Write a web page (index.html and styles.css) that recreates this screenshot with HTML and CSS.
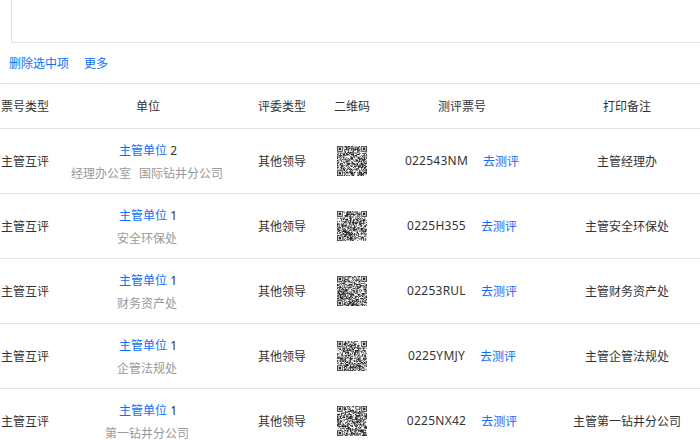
FILE: index.html
```
<!DOCTYPE html>
<html lang="zh-CN">
<head>
<meta charset="utf-8">
<title>测评票</title>
<link rel="stylesheet" href="styles.css">
</head>
<body>
<div class="page">
  <div class="textbox"></div>
  <div class="actions"><a>删除选中项</a><a>更多</a></div>
  <table class="grid">
    <colgroup><col class="c1"><col class="c2"><col class="c3"><col class="c4"><col class="c5"><col class="c6"></colgroup>
    <thead>
      <tr><th>票号类型</th><th>单位</th><th>评委类型</th><th>二维码</th><th>测评票号</th><th>打印备注</th></tr>
    </thead>
    <tbody>
      <tr>
        <td>主管互评</td>
        <td><div class="unit"><a>主管单位</a> 2</div><div class="dept"><span>经理办公室</span><span>国际钻井分公司</span></div></td>
        <td>其他领导</td>
        <td><svg class="qr" data-seed="11" viewBox="0 0 37 37"></svg></td>
        <td><div class="ticket"><span>022543NM</span><a>去测评</a></div></td>
        <td>主管经理办</td>
      </tr>
      <tr>
        <td>主管互评</td>
        <td><div class="unit"><a>主管单位</a> 1</div><div class="dept">安全环保处</div></td>
        <td>其他领导</td>
        <td><svg class="qr" data-seed="23" viewBox="0 0 37 37"></svg></td>
        <td><div class="ticket"><span>0225H355</span><a>去测评</a></div></td>
        <td>主管安全环保处</td>
      </tr>
      <tr>
        <td>主管互评</td>
        <td><div class="unit"><a>主管单位</a> 1</div><div class="dept">财务资产处</div></td>
        <td>其他领导</td>
        <td><svg class="qr" data-seed="37" viewBox="0 0 37 37"></svg></td>
        <td><div class="ticket"><span>02253RUL</span><a>去测评</a></div></td>
        <td>主管财务资产处</td>
      </tr>
      <tr>
        <td>主管互评</td>
        <td><div class="unit"><a>主管单位</a> 1</div><div class="dept">企管法规处</div></td>
        <td>其他领导</td>
        <td><svg class="qr" data-seed="41" viewBox="0 0 37 37"></svg></td>
        <td><div class="ticket"><span>0225YMJY</span><a>去测评</a></div></td>
        <td>主管企管法规处</td>
      </tr>
      <tr>
        <td>主管互评</td>
        <td><div class="unit"><a>主管单位</a> 1</div><div class="dept">第一钻井分公司</div></td>
        <td>其他领导</td>
        <td><svg class="qr" data-seed="59" viewBox="0 0 37 37"></svg></td>
        <td><div class="ticket"><span>0225NX42</span><a>去测评</a></div></td>
        <td>主管第一钻井分公司</td>
      </tr>
    </tbody>
  </table>
</div>
<script src="qr.js"></script>
</body>
</html>
```
FILE: styles.css
```
html, body {
  margin: 0;
  padding: 0;
  background: #fff;
}
.page {
  width: 700px;
  height: 440px;
  overflow: hidden;
  font-family: "Noto Sans", "Noto Sans CJK SC", sans-serif;
  font-size: 12px;
  color: #333;
}
a { color: #0d6efd; }
.textbox {
  box-sizing: border-box;
  height: 43px;
  margin-left: 11px;
  border-left: 1px solid #e2e2e2;
  border-bottom: 1px solid #e2e2e2;
}
.actions {
  display: flex;
  align-items: center;
  gap: 15px;
  height: 40px;
  padding-left: 9px;
}
.grid {
  width: 716px;
  table-layout: fixed;
  border-collapse: separate;
  border-spacing: 0;
}
.c1 { width: 50px; }
.c2 { width: 196px; }
.c3 { width: 72px; }
.c4 { width: 68px; }
.c5 { width: 152px; }
.c6 { width: 178px; }
th, td {
  box-sizing: border-box;
  padding: 0;
  text-align: center;
  font-weight: normal;
  border-bottom: 1px solid #e2e2e2;
}
th {
  height: 46px;
  border-top: 1px solid #e2e2e2;
}
td { height: 65px; }
.unit, .dept { line-height: 23px; }
.unit { margin-top: 2px; }
.dept {
  display: flex;
  justify-content: center;
  gap: 8px;
  padding-right: 2px;
  color: #999;
}
.ticket {
  display: flex;
  justify-content: center;
  gap: 15px;
}
.ticket span { letter-spacing: 0.25px; }
.qr {
  display: block;
  width: 30px;
  height: 30px;
  margin: 0 auto;
}
```
FILE: qr.js
```
function drawQr(svg) {
  var seed = Number(svg.getAttribute("data-seed"));
  var size = 37;
  function next() {
    seed = (seed * 1103515245 + 12345) % 2147483648;
    return (seed >> 8) % 100;
  }
  function finder(x, y, d) {
    var dx = Math.abs(x - d[0]);
    var dy = Math.abs(y - d[1]);
    var r = Math.max(dx, dy);
    if (r > 4) return null;
    return r === 2 || r === 4 ? 0 : 1;
  }
  var centres = [[3, 3], [33, 3], [3, 33]];
  var out = "";
  for (var y = 0; y < size; y++) {
    for (var x = 0; x < size; x++) {
      var v = null;
      for (var i = 0; i < 3; i++) {
        var f = finder(x, y, centres[i]);
        if (f !== null) v = f;
      }
      if (v === null) v = next() < 50 ? 1 : 0;
      if (v) out += "M" + x + " " + y + "h1v1h-1z";
    }
  }
  var path = document.createElementNS("http://www.w3.org/2000/svg", "path");
  path.setAttribute("d", out);
  path.setAttribute("fill", "#2a2a2a");
  svg.appendChild(path);
}
Array.prototype.forEach.call(document.querySelectorAll(".qr"), drawQr);
```
